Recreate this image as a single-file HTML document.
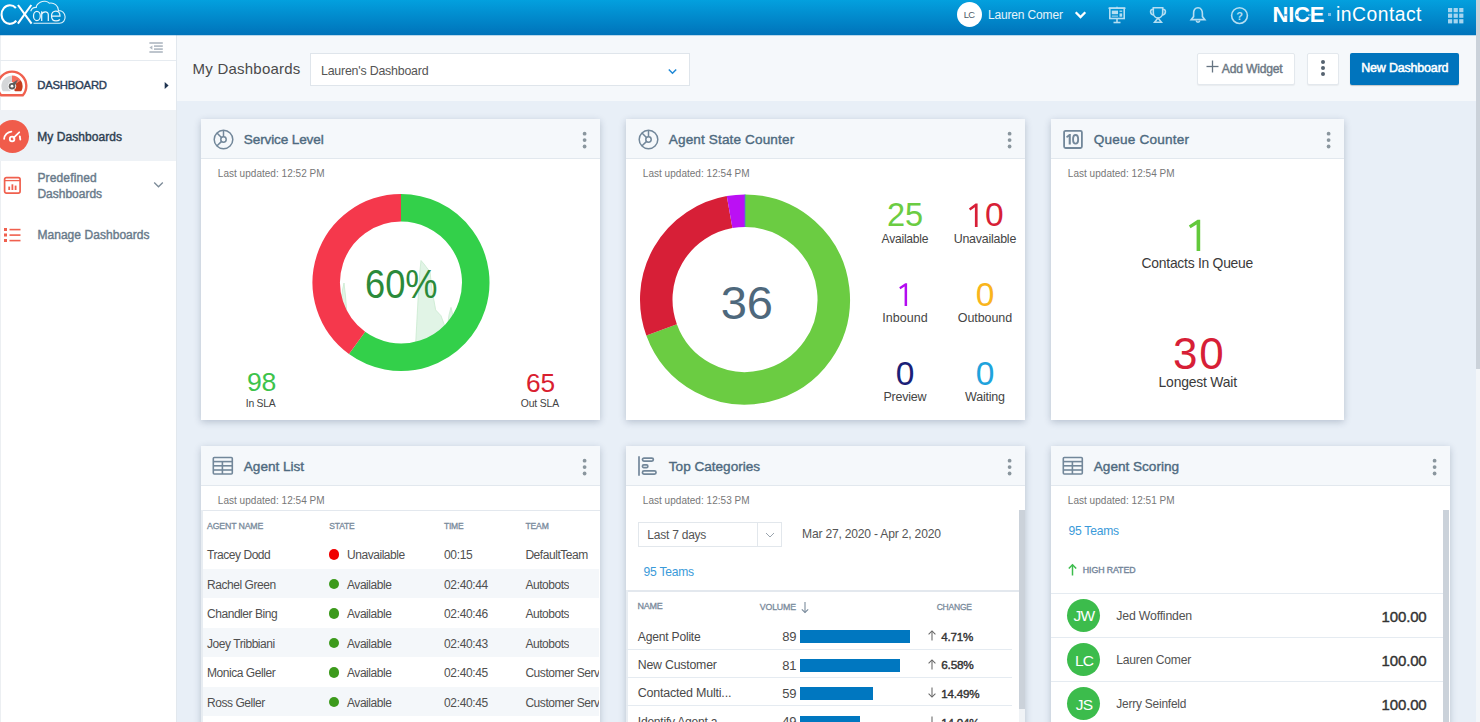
<!DOCTYPE html>
<html><head><meta charset="utf-8"><title>CXone Dashboard</title>
<style>
html,body{margin:0;padding:0;}
body{width:1480px;height:722px;overflow:hidden;position:relative;font-family:"Liberation Sans", sans-serif;background:#e9eff6;}
.t{position:absolute;white-space:nowrap;line-height:1;}
svg{overflow:visible}
</style></head><body>
<div style="position:absolute;left:0px;top:35px;width:1476px;height:687px;background:#e8eff7"></div><div style="position:absolute;left:0px;top:0px;width:1476px;height:35px;background:linear-gradient(#03a0de,#0073ba)"></div><div style="position:absolute;left:1476px;top:0px;width:4px;height:722px;background:#f3f6f9"></div><div style="position:absolute;left:1476px;top:0px;width:4px;height:369px;background:#cbd2da"></div><svg style="position:absolute;left:0px;top:0px;" width="70" height="35" viewBox="0 0 70 35"><g fill="none" stroke="#fff" stroke-width="2.1">
<path d="M15.9 8 A8.4 9.3 0 1 0 16.3 20.6"/>
<line x1="18" y1="5" x2="31.6" y2="23.6"/><line x1="31.3" y1="5" x2="17.9" y2="23.6"/></g>
<g fill="none" stroke="#eaf6fc" stroke-width="1.25">
<ellipse cx="36.9" cy="15.9" rx="3.4" ry="4.6"/>
<path d="M41.7 21 V11.2 M41.7 14.5 C42.3 11.5 48.3 10.3 48.3 14.8 V21"/>
<path d="M51.6 16 H60 C60 12.5 58 11 55.8 11 C53.2 11 51.5 13.2 51.5 16 C51.5 19 53.5 20.9 56 20.9 C57.8 20.9 59.2 20.2 59.9 19.5"/>
</g>
<path d="M33.5 23.2 H59.5 C63 23.2 65.3 20.3 65.1 16.8 C64.8 13 62 10.5 58.6 10.6 C58.3 5.5 54 2.3 49.3 3.2 C47.3 1 43.3 0.6 40.3 2.2 C37.6 3.6 36.3 5.6 36.3 7.4 C33.8 7.2 31.5 9 30.7 11.2" fill="none" stroke="#dff2fb" stroke-width="1.1"/>
</svg><div style="position:absolute;left:957px;top:2px;width:25px;height:25px;background:#fff;border-radius:50%"></div><div class="t" style="left:968.96px;transform:translateX(-50%);top:10.34px;font-size:9.4px;color:#4d5b68;letter-spacing:-0.675px;">LC</div><div class="t" style="left:988px;top:8.84px;font-size:12px;color:#e6f4fb;letter-spacing:-0.164px;">Lauren Comer</div><svg style="position:absolute;left:1073px;top:9px;" width="15" height="12" viewBox="0 0 15 12"><path d="M2.7 3.2 L7.5 8 L12.3 3.2" fill="none" stroke="#fff" stroke-width="2.3"/></svg><svg style="position:absolute;left:1107px;top:6px;" width="20" height="18" viewBox="0 0 20 18"><g fill="none" stroke="#b5def2" stroke-width="1.6">
<line x1="1.5" y1="2.2" x2="18.5" y2="2.2"/><rect x="2.8" y="2.2" width="14.4" height="10.3"/>
<line x1="10" y1="0.8" x2="10" y2="2.2"/><line x1="10" y1="12.5" x2="10" y2="16.3"/><line x1="6.5" y1="16.5" x2="13.5" y2="16.5"/></g>
<rect x="4.8" y="4.6" width="6.2" height="3.6" fill="#b5def2"/><line x1="4.8" y1="10.1" x2="11" y2="10.1" stroke="#b5def2" stroke-width="1"/><rect x="12.5" y="4.6" width="2.7" height="1.2" fill="#b5def2"/><rect x="12.5" y="7.4" width="2.7" height="3.3" fill="#b5def2"/></svg><svg style="position:absolute;left:1148px;top:6px;" width="20" height="18" viewBox="0 0 20 18"><g fill="none" stroke="#b5def2" stroke-width="1.6">
<path d="M5.3 1.8 H14.7 V6.5 C14.7 9.8 12.5 12 10 12 C7.5 12 5.3 9.8 5.3 6.5 Z"/>
<path d="M5.3 3.3 C1.8 3 1.4 8 5.8 9.2"/><path d="M14.7 3.3 C18.2 3 18.6 8 14.2 9.2"/>
<path d="M10 12 L6.6 16.3 H13.4 Z"/></g></svg><svg style="position:absolute;left:1189px;top:6px;" width="18" height="18" viewBox="0 0 18 18"><g fill="none" stroke="#b5def2" stroke-width="1.6">
<path d="M9 1.8 C5.8 1.8 4.6 4.6 4.6 7.6 V10.6 L2.2 13.6 H15.8 L13.4 10.6 V7.6 C13.4 4.6 12.2 1.8 9 1.8 Z"/>
<path d="M7.2 14.5 C7.4 16.6 10.6 16.6 10.8 14.5"/></g></svg><svg style="position:absolute;left:1230px;top:5.5px;" width="19" height="19" viewBox="0 0 19 19"><circle cx="9.5" cy="9.6" r="7.9" fill="none" stroke="#b5def2" stroke-width="1.6"/>
<text x="9.6" y="13.6" text-anchor="middle" font-family="Liberation Sans" font-size="11" font-weight="700" fill="#b5def2">?</text></svg><div class="t" style="left:1272.5px;top:4.38px;font-size:22.0px;color:#fff;font-weight:700;letter-spacing:-0.250px;">NICE</div><div style="position:absolute;left:1284px;top:13.5px;width:2.5px;height:2.5px;background:#6ab8e8"></div><div style="position:absolute;left:1296px;top:13.5px;width:2.5px;height:2.5px;background:#6ab8e8"></div><div style="position:absolute;left:1308px;top:13.5px;width:2.5px;height:2.5px;background:#6ab8e8"></div><div style="position:absolute;left:1327.5px;top:12.5px;width:3px;height:3px;background:#7cc0ea"></div><div class="t" style="left:1336px;top:5.16px;font-size:19.3px;color:#fff;letter-spacing:0.500px;">inContact</div><svg style="position:absolute;left:1448px;top:8px;" width="17" height="17" viewBox="0 0 17 17"><rect x="0.0" y="0.0" width="4.2" height="4.2" fill="#a6d5ef"/><rect x="5.6" y="0.0" width="4.2" height="4.2" fill="#a6d5ef"/><rect x="11.2" y="0.0" width="4.2" height="4.2" fill="#a6d5ef"/><rect x="0.0" y="5.6" width="4.2" height="4.2" fill="#a6d5ef"/><rect x="5.6" y="5.6" width="4.2" height="4.2" fill="#a6d5ef"/><rect x="11.2" y="5.6" width="4.2" height="4.2" fill="#a6d5ef"/><rect x="0.0" y="11.2" width="4.2" height="4.2" fill="#a6d5ef"/><rect x="5.6" y="11.2" width="4.2" height="4.2" fill="#a6d5ef"/><rect x="11.2" y="11.2" width="4.2" height="4.2" fill="#a6d5ef"/></svg><div style="position:absolute;left:0px;top:35px;width:176px;height:687px;background:#fff"></div><div style="position:absolute;left:176px;top:35px;width:1px;height:687px;background:#e2e8ee"></div><div style="position:absolute;left:0px;top:35px;width:1px;height:687px;background:#eceff2"></div><div style="position:absolute;left:0px;top:60px;width:176px;height:1px;background:#e6ebf0"></div><div style="position:absolute;left:0px;top:110px;width:176px;height:51px;background:#eef2f6"></div><svg style="position:absolute;left:149px;top:41px;" width="16" height="13" viewBox="0 0 16 13"><g stroke="#b3bbc4" stroke-width="1.7"><line x1="0.4" y1="2" x2="13.8" y2="2"/><line x1="5" y1="5.1" x2="13.8" y2="5.1"/><line x1="5" y1="8.1" x2="13.8" y2="8.1"/><line x1="0.4" y1="11" x2="13.8" y2="11"/></g><path d="M0.4 6.6 L3.4 4.4 V8.8 Z" fill="#b3bbc4"/></svg><svg style="position:absolute;left:0px;top:64px;" width="36" height="36" viewBox="0 0 36 36"><clipPath id="gclip"><rect x="-5" y="0" width="40" height="27.3"/></clipPath>
<path d="M1.2 31.3 A14.3 14.3 0 1 1 22.8 31.3 Z" fill="#fff" stroke="#f0604e" stroke-width="2.4"/>
<g clip-path="url(#gclip)">
<path d="M9.47 29.15 A7.4 7.4 0 0 1 12.00 14.80" fill="none" stroke="#d5d7d9" stroke-width="6.4"/>
<path d="M12.00 14.80 A7.4 7.4 0 0 1 18.13 18.06" fill="none" stroke="#f56d5c" stroke-width="6.4"/>
<path d="M18.13 18.06 A7.4 7.4 0 0 1 15.70 28.61" fill="none" stroke="#c53d1f" stroke-width="6.4"/>
</g>
<path d="M10.3 20.2 L18 15.6 L14 23.6 Z" fill="#5e5e5e"/>
<circle cx="12" cy="22.2" r="3.3" fill="#5e5e5e"/><circle cx="12" cy="22.2" r="1.4" fill="#fff"/></svg><div class="t" style="left:37.3px;top:80.43px;font-size:11.3px;color:#2b3e58;-webkit-text-stroke:0.4px #2b3e58;letter-spacing:-0.234px;">DASHBOARD</div><svg style="position:absolute;left:163px;top:81px;" width="7" height="9" viewBox="0 0 7 9"><path d="M1.7 0.9 L5.6 4.4 L1.7 7.9 Z" fill="#1f3350"/></svg><div style="position:absolute;left:-4.5px;top:120px;width:33.3px;height:33.3px;background:#f05c4b;border-radius:50%"></div><svg style="position:absolute;left:0px;top:125px;" width="28" height="24" viewBox="0 0 28 24"><g fill="none" stroke="#fff" stroke-width="1.8" stroke-linecap="round"><path d="M4.13 13.80 A8 8 0 0 1 11.40 6.53"/><line x1="13.5" y1="12.8" x2="19.2" y2="7.3"/><line x1="19.8" y1="11.5" x2="20.3" y2="14.5"/></g><circle cx="12.1" cy="14" r="2.3" fill="none" stroke="#fff" stroke-width="1.8"/></svg><div class="t" style="left:37.3px;top:130.64px;font-size:12px;color:#2d3e50;-webkit-text-stroke:0.4px #2d3e50;letter-spacing:0.056px;">My Dashboards</div><svg style="position:absolute;left:3px;top:176px;" width="19" height="19" viewBox="0 0 19 19"><rect x="1.6" y="1.6" width="15.5" height="15.5" rx="1.8" fill="none" stroke="#f0604e" stroke-width="1.7"/><line x1="1.6" y1="4.6" x2="17.1" y2="4.6" stroke="#f0604e" stroke-width="1.3"/><rect x="5.3" y="10.6" width="1.8" height="3.4" fill="#f0604e"/><rect x="8.5" y="8.3" width="1.8" height="5.7" fill="#f0604e"/><rect x="11.7" y="9.6" width="1.8" height="4.4" fill="#f0604e"/></svg><div class="t" style="left:37.4px;top:172.04px;font-size:12px;color:#687a8a;-webkit-text-stroke:0.4px #687a8a;letter-spacing:0.150px;">Predefined</div><div class="t" style="left:37.4px;top:187.54px;font-size:12px;color:#687a8a;-webkit-text-stroke:0.4px #687a8a;">Dashboards</div><svg style="position:absolute;left:153px;top:181px;" width="11" height="8" viewBox="0 0 11 8"><path d="M1.2 1.5 L5.5 5.8 L9.8 1.5" fill="none" stroke="#7c8b98" stroke-width="1.3"/></svg><svg style="position:absolute;left:3px;top:227px;" width="19" height="16" viewBox="0 0 19 16"><g fill="#f0604e"><rect x="1" y="1" width="3" height="3"/><rect x="1" y="6.5" width="3" height="3"/><rect x="1" y="12" width="3" height="3"/><rect x="6.5" y="1.8" width="11" height="1.6"/><rect x="6.5" y="7.3" width="11" height="1.6"/><rect x="6.5" y="12.8" width="11" height="1.6"/></g></svg><div class="t" style="left:37.4px;top:228.84px;font-size:12px;color:#687a8a;-webkit-text-stroke:0.4px #687a8a;letter-spacing:0.050px;">Manage Dashboards</div><div style="position:absolute;left:177px;top:35px;width:1299px;height:66px;background:#f5f8fb"></div><div class="t" style="left:192.6px;top:60.50px;font-size:15px;color:#4a4a4a;letter-spacing:0.221px;">My Dashboards</div><div style="position:absolute;left:310px;top:53px;width:380px;height:33px;background:#fff;border:1px solid #dfe5eb;box-sizing:border-box"></div><div class="t" style="left:321px;top:64.80px;font-size:12.4px;color:#555;letter-spacing:-0.215px;">Lauren's Dashboard</div><svg style="position:absolute;left:667px;top:68px;" width="11" height="8" viewBox="0 0 11 8"><path d="M1.8 1.5 L5.5 5.2 L9.2 1.5" fill="none" stroke="#1e88d6" stroke-width="1.5"/></svg><div style="position:absolute;left:1197px;top:53px;width:98px;height:32px;background:#fff;border:1px solid #e3e8ed;border-radius:2px;box-sizing:border-box;box-shadow:0 1px 1px rgba(0,0,0,0.05)"></div><svg style="position:absolute;left:1206px;top:60px;" width="13" height="13" viewBox="0 0 13 13"><g stroke="#667482" stroke-width="1.3"><line x1="6.5" y1="0.5" x2="6.5" y2="12.5"/><line x1="0.5" y1="6.5" x2="12.5" y2="6.5"/></g></svg><div class="t" style="left:1221.8px;top:62.76px;font-size:12.1px;color:#6b7783;-webkit-text-stroke:0.4px #6b7783;letter-spacing:-0.181px;">Add Widget</div><div style="position:absolute;left:1307px;top:53px;width:32px;height:32px;background:#fff;border:1px solid #e3e8ed;border-radius:2px;box-sizing:border-box;box-shadow:0 1px 1px rgba(0,0,0,0.05)"></div><div style="position:absolute;left:1321px;top:59.6px;width:4px;height:4px;background:#566370;border-radius:50%"></div><div style="position:absolute;left:1321px;top:66px;width:4px;height:4px;background:#566370;border-radius:50%"></div><div style="position:absolute;left:1321px;top:72.3px;width:4px;height:4px;background:#566370;border-radius:50%"></div><div style="position:absolute;left:1350px;top:53px;width:109px;height:32px;background:#0074bd;border-radius:2px;box-shadow:0 1px 1px rgba(0,0,0,0.2)"></div><div class="t" style="left:1361.2px;top:62.42px;font-size:12.5px;color:#fff;-webkit-text-stroke:0.5px #fff;letter-spacing:-0.188px;">New Dashboard</div><div style="position:absolute;left:0px;top:35px;width:1476px;height:1px;background:rgba(0,115,186,0.25)"></div><div style="position:absolute;left:201px;top:119px;width:399px;height:301px;background:#fff;box-shadow:0 2px 7px rgba(30,50,85,0.24)"></div><div style="position:absolute;left:201px;top:119px;width:399px;height:40px;background:#f5f8fb;border-bottom:1px solid #e2e8ee;box-sizing:border-box"></div><div class="t" style="left:243.8px;top:133.49px;font-size:13.6px;color:#4e6a80;-webkit-text-stroke:0.38px #4e6a80;letter-spacing:-0.144px;">Service Level</div><svg style="position:absolute;left:578px;top:127px;" width="12" height="26" viewBox="0 0 12 26"><circle cx="6.6" cy="6.70" r="1.9" fill="#8a969e"/><circle cx="6.6" cy="13.10" r="1.9" fill="#8a969e"/><circle cx="6.6" cy="19.50" r="1.9" fill="#8a969e"/></svg><svg style="position:absolute;left:212px;top:128px" width="24" height="24" viewBox="0 0 24 24"><g fill="none" stroke="#72879a" stroke-width="1.5"><circle cx="11.5" cy="11.5" r="9.3"/><circle cx="11.5" cy="11.5" r="2.7"/><line x1="11.5" y1="2.2" x2="11.5" y2="8.8"/><line x1="5" y1="5" x2="9.4" y2="9.6"/><line x1="4.8" y1="18" x2="9.6" y2="13.4"/></g></svg><div class="t" style="left:217.8px;top:168.94px;font-size:10px;color:#777;letter-spacing:0.027px;">Last updated: 12:52 PM</div><svg style="position:absolute;left:301px;top:180px;" width="200" height="200" viewBox="0 0 200 200"><clipPath id="ci"><circle cx="100" cy="102.5" r="62"/></clipPath><g clip-path="url(#ci)"><polygon points="35.0,220.0 39.5,125.0 41.5,110.0 43.0,103.0 44.5,116.0 46.0,135.0 48.0,220.0 112.0,220.0 114.8,161.0 117.0,120.0 119.0,90.0 120.0,80.5 123.0,84.0 126.0,88.0 129.0,91.5 131.0,110.0 134.7,130.0 140.0,135.7 143.0,144.0 146.0,150.0 148.0,135.0 150.0,127.4 152.7,138.5 157.0,165.0 161.0,220.0" fill="#e1f4e6" stroke="#c9eacf" stroke-width="0.8"/></g><path d="M100.00 27.75 A74.75 74.75 0 1 1 56.06 162.97" fill="none" stroke="#33d04a" stroke-width="27.5"/><path d="M56.06 162.97 A74.75 74.75 0 0 1 100.00 27.75" fill="none" stroke="#f5384c" stroke-width="27.5"/></svg><div class="t" style="left:365.4px;top:263.69px;font-size:41px;color:#2b8a3a;transform:scaleX(0.885);transform-origin:0 0;">60%</div><div class="t" style="left:247px;top:369.28px;font-size:26.6px;color:#3dc34b;letter-spacing:-0.225px;">98</div><div class="t" style="left:245.8px;top:398.80px;font-size:10.4px;color:#444;letter-spacing:-0.245px;">In SLA</div><div class="t" style="left:526px;top:369.54px;font-size:26.3px;color:#d9202f;letter-spacing:-0.150px;">65</div><div class="t" style="left:520.8px;top:398.80px;font-size:10.4px;color:#444;letter-spacing:-0.154px;">Out SLA</div><div style="position:absolute;left:626px;top:119px;width:399px;height:301px;background:#fff;box-shadow:0 2px 7px rgba(30,50,85,0.24)"></div><div style="position:absolute;left:626px;top:119px;width:399px;height:40px;background:#f5f8fb;border-bottom:1px solid #e2e8ee;box-sizing:border-box"></div><div class="t" style="left:668.8px;top:133.49px;font-size:13.6px;color:#4e6a80;-webkit-text-stroke:0.38px #4e6a80;letter-spacing:0.121px;">Agent State Counter</div><svg style="position:absolute;left:1003px;top:127px;" width="12" height="26" viewBox="0 0 12 26"><circle cx="6.6" cy="6.70" r="1.9" fill="#8a969e"/><circle cx="6.6" cy="13.10" r="1.9" fill="#8a969e"/><circle cx="6.6" cy="19.50" r="1.9" fill="#8a969e"/></svg><svg style="position:absolute;left:637px;top:128px" width="24" height="24" viewBox="0 0 24 24"><g fill="none" stroke="#72879a" stroke-width="1.5"><circle cx="11.5" cy="11.5" r="9.3"/><circle cx="11.5" cy="11.5" r="2.7"/><line x1="11.5" y1="2.2" x2="11.5" y2="8.8"/><line x1="5" y1="5" x2="9.4" y2="9.6"/><line x1="4.8" y1="18" x2="9.6" y2="13.4"/></g></svg><div class="t" style="left:642.8px;top:168.94px;font-size:10px;color:#777;letter-spacing:0.027px;">Last updated: 12:54 PM</div><svg style="position:absolute;left:630px;top:190px;" width="230" height="230" viewBox="0 0 230 230"><path d="M115.00 20.75 A88.75 88.75 0 1 1 31.60 139.85" fill="none" stroke="#6bcc42" stroke-width="32.5"/><path d="M31.60 139.85 A88.75 88.75 0 0 1 99.59 22.10" fill="none" stroke="#d71f37" stroke-width="32.5"/><path d="M99.59 22.10 A88.75 88.75 0 0 1 115.00 20.75" fill="none" stroke="#bb10f4" stroke-width="32.5"/><line x1="115" y1="4.5" x2="115" y2="37.0" stroke="#3a8ad0" stroke-width="0.8"/></svg><div class="t" style="left:720.8px;top:279.33px;font-size:47.1px;color:#4e687c;letter-spacing:-0.225px;">36</div><div class="t" style="left:904.92px;transform:translateX(-50%);top:199.20px;font-size:32.6px;color:#6bcc42;letter-spacing:-0.150px;">25</div><div class="t" style="left:904.88px;transform:translateX(-50%);top:232.86px;font-size:12.1px;color:#454545;letter-spacing:-0.250px;">Available</div><svg style="position:absolute;left:0;top:0" width="1480" height="722"><polygon points="974.90,227.00 977.60,227.00 977.60,203.40 975.56,203.40 968.91,208.54 970.29,210.46 974.90,207.14" fill="#d71f37"/></svg><div class="t" style="left:985px;top:198.44px;font-size:33.5px;color:#d71f37;">0</div><div class="t" style="left:984.89px;transform:translateX(-50%);top:232.60px;font-size:12.4px;color:#454545;letter-spacing:-0.212px;">Unavailable</div><svg style="position:absolute;left:0;top:0" width="1480" height="722"><polygon points="904.60,306.00 907.10,306.00 907.10,283.20 905.27,283.20 899.22,287.27 900.38,289.13 904.60,286.49" fill="#b30cf0"/></svg><div class="t" style="left:905.02px;transform:translateX(-50%);top:311.92px;font-size:12.5px;color:#454545;letter-spacing:0.042px;">Inbound</div><div class="t" style="left:985.00px;transform:translateX(-50%);top:277.84px;font-size:33.5px;color:#f9b51c;">0</div><div class="t" style="left:984.96px;transform:translateX(-50%);top:311.92px;font-size:12.5px;color:#454545;letter-spacing:-0.071px;">Outbound</div><div class="t" style="left:905.00px;transform:translateX(-50%);top:357.24px;font-size:33.5px;color:#1b1f78;">0</div><div class="t" style="left:904.89px;transform:translateX(-50%);top:391.32px;font-size:12.5px;color:#454545;letter-spacing:-0.229px;">Preview</div><div class="t" style="left:985.00px;transform:translateX(-50%);top:357.24px;font-size:33.5px;color:#1fa3dc;">0</div><div class="t" style="left:984.89px;transform:translateX(-50%);top:391.32px;font-size:12.5px;color:#454545;letter-spacing:-0.229px;">Waiting</div><div style="position:absolute;left:1051px;top:119px;width:293px;height:301px;background:#fff;box-shadow:0 2px 7px rgba(30,50,85,0.24)"></div><div style="position:absolute;left:1051px;top:119px;width:293px;height:40px;background:#f5f8fb;border-bottom:1px solid #e2e8ee;box-sizing:border-box"></div><div class="t" style="left:1093.8px;top:133.49px;font-size:13.6px;color:#4e6a80;-webkit-text-stroke:0.38px #4e6a80;letter-spacing:0.187px;">Queue Counter</div><svg style="position:absolute;left:1322px;top:127px;" width="12" height="26" viewBox="0 0 12 26"><circle cx="6.6" cy="6.70" r="1.9" fill="#8a969e"/><circle cx="6.6" cy="13.10" r="1.9" fill="#8a969e"/><circle cx="6.6" cy="19.50" r="1.9" fill="#8a969e"/></svg><svg style="position:absolute;left:1062px;top:128px" width="24" height="24" viewBox="0 0 24 24"><rect x="2.1" y="2.8" width="17.8" height="17.2" rx="1.5" fill="none" stroke="#72879a" stroke-width="1.8"/><polygon points="6.7,16.6 8.8,16.6 8.8,6.1 7.2,6.1 4.1,8.6 5.0,10.0 6.7,8.8" fill="#72879a"/><ellipse cx="13.6" cy="11.35" rx="2.55" ry="4.3" fill="none" stroke="#72879a" stroke-width="1.9"/></svg><div class="t" style="left:1067.8px;top:168.94px;font-size:10px;color:#777;letter-spacing:0.027px;">Last updated: 12:54 PM</div><svg style="position:absolute;left:0;top:0" width="1480" height="722"><polygon points="1196.60,251.00 1200.20,251.00 1200.20,219.70 1197.56,219.70 1188.86,225.56 1190.54,228.24 1196.60,224.44" fill="#62c93a"/></svg><div class="t" style="left:1141.6px;top:256.73px;font-size:13.9px;color:#3a3a3a;letter-spacing:-0.261px;">Contacts In Queue</div><div class="t" style="left:1173px;top:332.45px;font-size:44px;color:#d71f37;letter-spacing:1.875px;">30</div><div class="t" style="left:1158.6px;top:376.23px;font-size:13.9px;color:#3a3a3a;letter-spacing:-0.195px;">Longest Wait</div><div style="position:absolute;left:201px;top:446px;width:399px;height:286px;background:#fff;box-shadow:0 2px 7px rgba(30,50,85,0.24)"></div><div style="position:absolute;left:201px;top:446px;width:399px;height:40px;background:#f5f8fb;border-bottom:1px solid #e2e8ee;box-sizing:border-box"></div><div class="t" style="left:243.8px;top:460.49px;font-size:13.6px;color:#4e6a80;-webkit-text-stroke:0.38px #4e6a80;letter-spacing:-0.020px;">Agent List</div><svg style="position:absolute;left:578px;top:454px;" width="12" height="26" viewBox="0 0 12 26"><circle cx="6.6" cy="6.70" r="1.9" fill="#8a969e"/><circle cx="6.6" cy="13.10" r="1.9" fill="#8a969e"/><circle cx="6.6" cy="19.50" r="1.9" fill="#8a969e"/></svg><svg style="position:absolute;left:212px;top:456px" width="22" height="20" viewBox="0 0 22 20"><g fill="none" stroke="#72879a" stroke-width="1.6"><rect x="1.3" y="1.5" width="19" height="16.5" rx="1"/><line x1="1.3" y1="5.6" x2="20.3" y2="5.6"/><line x1="1.3" y1="9.8" x2="20.3" y2="9.8"/><line x1="1.3" y1="14" x2="20.3" y2="14"/><line x1="10.4" y1="5.6" x2="10.4" y2="18"/></g></svg><div class="t" style="left:217.8px;top:495.64px;font-size:10px;color:#777;letter-spacing:0.027px;">Last updated: 12:54 PM</div><div style="position:absolute;left:201px;top:510px;width:399px;height:1px;background:#e3e8ee"></div><div style="position:absolute;left:201px;top:510px;width:2px;height:212px;background:#e8edf2"></div><div class="t" style="left:207px;top:521.95px;font-size:8.8px;color:#7a8b9c;-webkit-text-stroke:0.3px #7a8b9c;letter-spacing:-0.186px;">AGENT NAME</div><div class="t" style="left:329.3px;top:522.20px;font-size:8.5px;color:#7a8b9c;-webkit-text-stroke:0.3px #7a8b9c;letter-spacing:-0.200px;">STATE</div><div class="t" style="left:444px;top:522.20px;font-size:8.5px;color:#7a8b9c;-webkit-text-stroke:0.3px #7a8b9c;letter-spacing:-0.225px;">TIME</div><div class="t" style="left:525.4px;top:522.12px;font-size:8.6px;color:#7a8b9c;-webkit-text-stroke:0.3px #7a8b9c;letter-spacing:-0.142px;">TEAM</div><div style="position:absolute;left:203px;top:568.5px;width:396px;height:29.6px;background:#f4f7fa"></div><div style="position:absolute;left:203px;top:627.6px;width:396px;height:29.6px;background:#f4f7fa"></div><div style="position:absolute;left:203px;top:686.8px;width:396px;height:29.6px;background:#f4f7fa"></div><div class="t" style="left:207px;top:549.04px;font-size:12px;color:#505050;letter-spacing:-0.45px;">Tracey Dodd</div><div style="position:absolute;left:328.8px;top:549.1px;width:10.5px;height:10.5px;border-radius:50%;background:#f00000"></div><div class="t" style="left:347px;top:549.04px;font-size:12px;color:#505050;letter-spacing:-0.45px;">Unavailable</div><div class="t" style="left:444px;top:549.04px;font-size:12px;color:#505050;letter-spacing:-0.35px;">00:15</div><div class="t" style="left:525.4px;top:549.04px;font-size:12px;color:#505050;letter-spacing:-0.45px;max-width:73.6px;overflow:hidden;">DefaultTeam</div><div class="t" style="left:207px;top:578.59px;font-size:12px;color:#505050;letter-spacing:-0.45px;">Rachel Green</div><div style="position:absolute;left:328.8px;top:578.6px;width:10.5px;height:10.5px;border-radius:50%;background:#3c9a1c"></div><div class="t" style="left:347px;top:578.59px;font-size:12px;color:#505050;letter-spacing:-0.45px;">Available</div><div class="t" style="left:444px;top:578.59px;font-size:12px;color:#505050;letter-spacing:-0.35px;">02:40:44</div><div class="t" style="left:525.4px;top:578.59px;font-size:12px;color:#505050;letter-spacing:-0.45px;max-width:73.6px;overflow:hidden;">Autobots</div><div class="t" style="left:207px;top:608.14px;font-size:12px;color:#505050;letter-spacing:-0.45px;">Chandler Bing</div><div style="position:absolute;left:328.8px;top:608.2px;width:10.5px;height:10.5px;border-radius:50%;background:#3c9a1c"></div><div class="t" style="left:347px;top:608.14px;font-size:12px;color:#505050;letter-spacing:-0.45px;">Available</div><div class="t" style="left:444px;top:608.14px;font-size:12px;color:#505050;letter-spacing:-0.35px;">02:40:46</div><div class="t" style="left:525.4px;top:608.14px;font-size:12px;color:#505050;letter-spacing:-0.45px;max-width:73.6px;overflow:hidden;">Autobots</div><div class="t" style="left:207px;top:637.69px;font-size:12px;color:#505050;letter-spacing:-0.45px;">Joey Tribbiani</div><div style="position:absolute;left:328.8px;top:637.8px;width:10.5px;height:10.5px;border-radius:50%;background:#3c9a1c"></div><div class="t" style="left:347px;top:637.69px;font-size:12px;color:#505050;letter-spacing:-0.45px;">Available</div><div class="t" style="left:444px;top:637.69px;font-size:12px;color:#505050;letter-spacing:-0.35px;">02:40:43</div><div class="t" style="left:525.4px;top:637.69px;font-size:12px;color:#505050;letter-spacing:-0.45px;max-width:73.6px;overflow:hidden;">Autobots</div><div class="t" style="left:207px;top:667.24px;font-size:12px;color:#505050;letter-spacing:-0.45px;">Monica Geller</div><div style="position:absolute;left:328.8px;top:667.3px;width:10.5px;height:10.5px;border-radius:50%;background:#3c9a1c"></div><div class="t" style="left:347px;top:667.24px;font-size:12px;color:#505050;letter-spacing:-0.45px;">Available</div><div class="t" style="left:444px;top:667.24px;font-size:12px;color:#505050;letter-spacing:-0.35px;">02:40:45</div><div class="t" style="left:525.4px;top:667.24px;font-size:12px;color:#505050;letter-spacing:-0.45px;max-width:73.6px;overflow:hidden;">Customer Service</div><div class="t" style="left:207px;top:696.79px;font-size:12px;color:#505050;letter-spacing:-0.45px;">Ross Geller</div><div style="position:absolute;left:328.8px;top:696.9px;width:10.5px;height:10.5px;border-radius:50%;background:#3c9a1c"></div><div class="t" style="left:347px;top:696.79px;font-size:12px;color:#505050;letter-spacing:-0.45px;">Available</div><div class="t" style="left:444px;top:696.79px;font-size:12px;color:#505050;letter-spacing:-0.35px;">02:40:45</div><div class="t" style="left:525.4px;top:696.79px;font-size:12px;color:#505050;letter-spacing:-0.45px;max-width:73.6px;overflow:hidden;">Customer Service</div><div style="position:absolute;left:626px;top:446px;width:399px;height:286px;background:#fff;box-shadow:0 2px 7px rgba(30,50,85,0.24)"></div><div style="position:absolute;left:626px;top:446px;width:399px;height:40px;background:#f5f8fb;border-bottom:1px solid #e2e8ee;box-sizing:border-box"></div><div class="t" style="left:668.8px;top:460.49px;font-size:13.6px;color:#4e6a80;-webkit-text-stroke:0.38px #4e6a80;letter-spacing:-0.014px;">Top Categories</div><svg style="position:absolute;left:1003px;top:454px;" width="12" height="26" viewBox="0 0 12 26"><circle cx="6.6" cy="6.70" r="1.9" fill="#8a969e"/><circle cx="6.6" cy="13.10" r="1.9" fill="#8a969e"/><circle cx="6.6" cy="19.50" r="1.9" fill="#8a969e"/></svg><svg style="position:absolute;left:637px;top:456px" width="22" height="22" viewBox="0 0 22 22"><g fill="none" stroke="#72879a" stroke-width="1.7"><line x1="2" y1="0.3" x2="2" y2="19.7"/><rect x="5.45" y="2.15" width="10.9" height="2.9" rx="1.45"/><rect x="5.45" y="8.85" width="5.4" height="2.7" rx="1.35"/><rect x="5.45" y="14.95" width="13.6" height="3.2" rx="1.6"/></g></svg><div class="t" style="left:642.8px;top:495.64px;font-size:10px;color:#777;letter-spacing:0.027px;">Last updated: 12:53 PM</div><div style="position:absolute;left:1019px;top:510px;width:6px;height:212px;background:#f0f3f6"></div><div style="position:absolute;left:1019px;top:510px;width:6px;height:198.5px;background:#cbd2da"></div><div style="position:absolute;left:638px;top:522px;width:144px;height:25px;background:#fff;border:1px solid #e2e7ec;box-sizing:border-box"></div><div style="position:absolute;left:757px;top:522px;width:1px;height:25px;background:#e2e7ec"></div><svg style="position:absolute;left:765px;top:532px;" width="10" height="7" viewBox="0 0 10 7"><path d="M1 1 L5 5 L9 1" fill="none" stroke="#9aa4ad" stroke-width="1"/></svg><div class="t" style="left:647.3px;top:529.04px;font-size:12.0px;color:#555;letter-spacing:-0.230px;">Last 7 days</div><div class="t" style="left:802px;top:527.86px;font-size:12.1px;color:#555;letter-spacing:-0.198px;">Mar 27, 2020 - Apr 2, 2020</div><div class="t" style="left:643.5px;top:565.76px;font-size:12.1px;color:#3a9ad9;letter-spacing:-0.225px;">95 Teams</div><div style="position:absolute;left:626px;top:590px;width:393px;height:1.5px;background:#e3e8ee"></div><div style="position:absolute;left:626px;top:590px;width:1.5px;height:132px;background:#e8edf2"></div><div class="t" style="left:637.5px;top:602.38px;font-size:9.0px;color:#7a8b9c;-webkit-text-stroke:0.3px #7a8b9c;letter-spacing:-0.225px;">NAME</div><div class="t" style="left:759.8px;top:602.55px;font-size:8.8px;color:#7a8b9c;-webkit-text-stroke:0.3px #7a8b9c;letter-spacing:-0.185px;">VOLUME</div><svg style="position:absolute;left:800px;top:601px;" width="10" height="13" viewBox="0 0 10 13"><g fill="none" stroke="#7a8b9c" stroke-width="1.1"><line x1="5" y1="1" x2="5" y2="11.5"/><path d="M1.8 8.3 L5 11.5 L8.2 8.3"/></g></svg><div class="t" style="left:936.7px;top:602.80px;font-size:8.5px;color:#7a8b9c;-webkit-text-stroke:0.3px #7a8b9c;letter-spacing:-0.210px;">CHANGE</div><div class="t" style="left:637.8px;top:630.96px;font-size:12.1px;color:#4a4a4a;letter-spacing:-0.207px;">Agent Polite</div><div class="t" style="right:684.00px;top:630.20px;font-size:13px;color:#4a4a4a;letter-spacing:-0.4px;">89</div><div style="position:absolute;left:800px;top:630.4px;width:110px;height:12.8px;background:#0077c0"></div><svg style="position:absolute;left:926.8px;top:630.4px;" width="10" height="12" viewBox="0 0 10 12"><g fill="none" stroke="#666" stroke-width="1.05"><line x1="5" y1="1" x2="5" y2="10.5"/><path d="M1.6 4.4 L5 1 L8.4 4.4"/></g></svg><div class="t" style="left:941.3px;top:631.38px;font-size:11.6px;color:#333;-webkit-text-stroke:0.4px #333;letter-spacing:-0.237px;">4.71%</div><div style="position:absolute;left:626px;top:648.6px;width:386px;height:1px;background:#e5ebf1"></div><div class="t" style="left:637.8px;top:659.19px;font-size:12.3px;color:#4a4a4a;letter-spacing:-0.205px;">New Customer</div><div class="t" style="right:684.00px;top:658.60px;font-size:13px;color:#4a4a4a;letter-spacing:-0.4px;">81</div><div style="position:absolute;left:800px;top:658.8px;width:100px;height:12.8px;background:#0077c0"></div><svg style="position:absolute;left:926.8px;top:658.8px;" width="10" height="12" viewBox="0 0 10 12"><g fill="none" stroke="#666" stroke-width="1.05"><line x1="5" y1="1" x2="5" y2="10.5"/><path d="M1.6 4.4 L5 1 L8.4 4.4"/></g></svg><div class="t" style="left:941.3px;top:659.61px;font-size:11.8px;color:#333;-webkit-text-stroke:0.4px #333;letter-spacing:-0.237px;">6.58%</div><div style="position:absolute;left:626px;top:677.0px;width:386px;height:1px;background:#e5ebf1"></div><div class="t" style="left:637.8px;top:687.42px;font-size:12.5px;color:#4a4a4a;letter-spacing:-0.218px;">Contacted Multi...</div><div class="t" style="right:684.00px;top:687.00px;font-size:13px;color:#4a4a4a;letter-spacing:-0.4px;">59</div><div style="position:absolute;left:800px;top:687.2px;width:72.5px;height:12.8px;background:#0077c0"></div><svg style="position:absolute;left:926.8px;top:687.2px;" width="10" height="12" viewBox="0 0 10 12"><g fill="none" stroke="#666" stroke-width="1.05"><line x1="5" y1="0.5" x2="5" y2="10"/><path d="M1.6 6.6 L5 10 L8.4 6.6"/></g></svg><div class="t" style="left:941.3px;top:688.18px;font-size:11.6px;color:#333;-webkit-text-stroke:0.4px #333;letter-spacing:-0.205px;">14.49%</div><div style="position:absolute;left:626px;top:705.4px;width:386px;height:1px;background:#e5ebf1"></div><div class="t" style="left:637.8px;top:716.16px;font-size:12.1px;color:#4a4a4a;letter-spacing:-0.250px;">Identify Agent a...</div><div class="t" style="right:684.00px;top:715.40px;font-size:13px;color:#4a4a4a;letter-spacing:-0.4px;">49</div><div style="position:absolute;left:800px;top:715.6px;width:60px;height:12.8px;background:#0077c0"></div><svg style="position:absolute;left:926.8px;top:715.6px;" width="10" height="12" viewBox="0 0 10 12"><g fill="none" stroke="#666" stroke-width="1.05"><line x1="5" y1="0.5" x2="5" y2="10"/><path d="M1.6 6.6 L5 10 L8.4 6.6"/></g></svg><div class="t" style="left:941.3px;top:716.58px;font-size:11.6px;color:#333;-webkit-text-stroke:0.4px #333;letter-spacing:-0.205px;">14.04%</div><div style="position:absolute;left:626px;top:733.8px;width:386px;height:1px;background:#e5ebf1"></div><div style="position:absolute;left:626px;top:722px;width:400px;height:0px;"></div><div style="position:absolute;left:1051px;top:446px;width:399px;height:286px;background:#fff;box-shadow:0 2px 7px rgba(30,50,85,0.24)"></div><div style="position:absolute;left:1051px;top:446px;width:399px;height:40px;background:#f5f8fb;border-bottom:1px solid #e2e8ee;box-sizing:border-box"></div><div class="t" style="left:1093.8px;top:460.49px;font-size:13.6px;color:#4e6a80;-webkit-text-stroke:0.38px #4e6a80;letter-spacing:-0.011px;">Agent Scoring</div><svg style="position:absolute;left:1428px;top:454px;" width="12" height="26" viewBox="0 0 12 26"><circle cx="6.6" cy="6.70" r="1.9" fill="#8a969e"/><circle cx="6.6" cy="13.10" r="1.9" fill="#8a969e"/><circle cx="6.6" cy="19.50" r="1.9" fill="#8a969e"/></svg><svg style="position:absolute;left:1062px;top:456px" width="22" height="20" viewBox="0 0 22 20"><g fill="none" stroke="#72879a" stroke-width="1.6"><rect x="1.3" y="1.5" width="19" height="16.5" rx="1"/><line x1="1.3" y1="5.6" x2="20.3" y2="5.6"/><line x1="1.3" y1="9.8" x2="20.3" y2="9.8"/><line x1="1.3" y1="14" x2="20.3" y2="14"/><line x1="10.4" y1="5.6" x2="10.4" y2="18"/></g></svg><div class="t" style="left:1067.8px;top:495.64px;font-size:10px;color:#777;letter-spacing:0.027px;">Last updated: 12:51 PM</div><div style="position:absolute;left:1443px;top:510px;width:6px;height:212px;background:#cbd2da"></div><div class="t" style="left:1068.4px;top:525.06px;font-size:12.1px;color:#3a9ad9;letter-spacing:-0.225px;">95 Teams</div><svg style="position:absolute;left:1067px;top:563px;" width="11" height="13" viewBox="0 0 11 13"><g fill="none" stroke="#3cbc4c" stroke-width="1.5"><line x1="5.5" y1="1.8" x2="5.5" y2="12.5"/><path d="M1.8 5.5 L5.5 1.8 L9.2 5.5"/></g></svg><div class="t" style="left:1082.8px;top:566.35px;font-size:8.8px;color:#73859a;-webkit-text-stroke:0.35px #73859a;letter-spacing:-0.097px;">HIGH RATED</div><div style="position:absolute;left:1051px;top:593px;width:392px;height:1px;background:#e5ebf1"></div><div style="position:absolute;left:1067.4px;top:598.5px;width:33px;height:33px;background:#3cbc4c;border-radius:50%"></div><div class="t" style="left:1084.00px;transform:translateX(-50%);top:608.48px;font-size:15.5px;color:#fff;letter-spacing:-0.8px;">JW</div><div class="t" style="left:1116.3px;top:609.99px;font-size:12.3px;color:#525252;letter-spacing:-0.188px;">Jed Woffinden</div><div class="t" style="right:53.44px;top:608.70px;font-size:15px;color:#333;-webkit-text-stroke:0.4px #333;letter-spacing:-0.145px;">100.00</div><div style="position:absolute;left:1051px;top:637.2px;width:392px;height:1px;background:#e5ebf1"></div><div style="position:absolute;left:1067.4px;top:642.7px;width:33px;height:33px;background:#3cbc4c;border-radius:50%"></div><div class="t" style="left:1084.00px;transform:translateX(-50%);top:652.68px;font-size:15.5px;color:#fff;letter-spacing:-0.8px;">LC</div><div class="t" style="left:1116.3px;top:654.36px;font-size:12.1px;color:#525252;letter-spacing:-0.216px;">Lauren Comer</div><div class="t" style="right:53.44px;top:652.90px;font-size:15px;color:#333;-webkit-text-stroke:0.4px #333;letter-spacing:-0.145px;">100.00</div><div style="position:absolute;left:1051px;top:681.4px;width:392px;height:1px;background:#e5ebf1"></div><div style="position:absolute;left:1067.4px;top:686.9px;width:33px;height:33px;background:#3cbc4c;border-radius:50%"></div><div class="t" style="left:1084.00px;transform:translateX(-50%);top:696.88px;font-size:15.5px;color:#fff;letter-spacing:-0.8px;">JS</div><div class="t" style="left:1116.3px;top:698.73px;font-size:11.9px;color:#525252;letter-spacing:-0.202px;">Jerry Seinfeld</div><div class="t" style="right:53.44px;top:697.10px;font-size:15px;color:#333;-webkit-text-stroke:0.4px #333;letter-spacing:-0.145px;">100.00</div>
</body></html>
